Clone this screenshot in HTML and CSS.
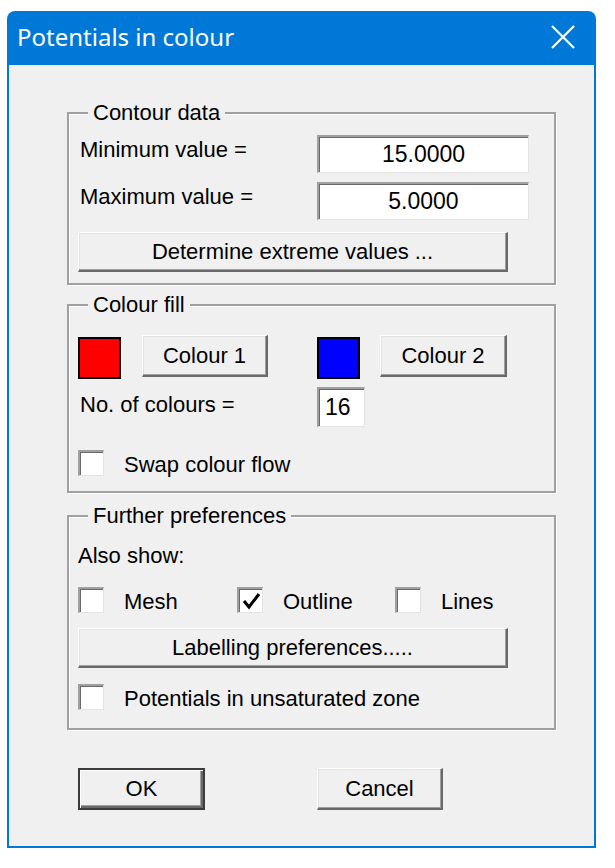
FILE: index.html
```html
<!DOCTYPE html>
<html>
<head>
<meta charset="utf-8">
<link rel="stylesheet" href="styles.css">
</head>
<body>
<div class="window">
  <div class="titlebar">
    <span class="title">Potentials in colour</span>
    <svg class="close" width="24" height="24" viewBox="0 0 24 24"><path d="M1 1 L23 23 M23 1 L1 23" stroke="#fff" stroke-width="2.2" fill="none"/></svg>
  </div>
  <div class="client">
    <fieldset class="group g1">
      <legend>Contour data</legend>
      <div class="vrow">
        <span class="label">Minimum value =</span>
        <div class="field val">15.0000</div>
      </div>
      <div class="vrow r2">
        <span class="label">Maximum value =</span>
        <div class="field val">5.0000</div>
      </div>
      <div class="btn full b-det">Determine extreme values ...</div>
    </fieldset>

    <fieldset class="group g2">
      <legend>Colour fill</legend>
      <div class="crow">
        <span class="swatch red"></span>
        <div class="btn cbtn">Colour 1</div>
        <span class="swatch blue"></span>
        <div class="btn cbtn">Colour 2</div>
      </div>
      <div class="nrow">
        <span class="label">No. of colours =</span>
        <div class="field num">16</div>
      </div>
      <label class="check swap"><span class="box"></span><span class="ctext">Swap colour flow</span></label>
    </fieldset>

    <fieldset class="group g3">
      <legend>Further preferences</legend>
      <div class="also">Also show:</div>
      <div class="checks">
        <label class="check c-mesh"><span class="box"></span><span class="ctext">Mesh</span></label>
        <label class="check c-outline"><span class="box"><svg width="22" height="22" viewBox="0 0 22 22"><path d="M4 11 L9 17 L19 4" stroke="#000" stroke-width="3" fill="none"/></svg></span><span class="ctext">Outline</span></label>
        <label class="check c-lines"><span class="box"></span><span class="ctext">Lines</span></label>
      </div>
      <div class="btn full b-lab">Labelling preferences.....</div>
      <label class="check unsat"><span class="box"></span><span class="ctext">Potentials in unsaturated zone</span></label>
    </fieldset>

    <div class="actions">
      <div class="btn ok">OK</div>
      <div class="btn cancel">Cancel</div>
    </div>
  </div>
</div>
</body>
</html>
```

FILE: styles.css
```css
* { box-sizing: border-box; }
html, body { margin: 0; padding: 0; background: #ffffff; }
body {
  padding: 11px 0 0 7px;
  font-family: "Liberation Sans", Arial, sans-serif;
  font-size: 22px;
  color: #000;
}
.window {
  width: 589px;
  background: #0078d7;
  border-radius: 8px 8px 0 0;
  padding: 0 2px 2px 2px;
}
.titlebar {
  height: 54px;
  display: flex;
  align-items: center;
  justify-content: space-between;
  padding: 0 19px 0 8px;
}
.title {
  font-family: "Noto Sans", "Open Sans", sans-serif;
  font-size: 24px;
  color: #fff;
  line-height: 30px;
  margin-top: -2px;
}
.close { display: block; margin-top: -2px; }
.client {
  background: #f0f0f0;
  height: 781px;
  padding: 36px 0 0 58px;
}
.group {
  margin: 0;
  width: 489px;
  min-width: 0;
  border: 2px solid #a0a0a0;
  box-shadow: inset 1px 1px 0 #fff, 1px 1px 0 #fff;
  padding: 10px 9px 11px 9px;
}
.group legend {
  margin-left: 10px;
  padding: 0 5px;
  line-height: 24px;
  font-size: 22px;
  background: #f0f0f0;
}
.label { line-height: 24px; white-space: nowrap; }
.vrow {
  display: grid;
  grid-template-columns: 239px 212px;
  align-items: start;
}
.vrow .label { padding: 3px 0 0 2px; }
.vrow.r2 { margin-top: 9px; }
.field {
  background: #fff;
  border-style: solid;
  border-width: 2px 1px 1px 2px;
  border-color: #a0a0a0 #e3e3e3 #e3e3e3 #a0a0a0;
  box-shadow: inset 1px 1px 0 #696969;
  display: flex;
  align-items: center;
  justify-content: center;
  font-size: 23px;
}
.field.val { height: 38px; }
.btn {
  display: flex;
  align-items: center;
  justify-content: center;
  background: #f0f0f0;
  border-style: solid;
  border-width: 1px 2px 2px 1px;
  border-color: #fff #696969 #696969 #fff;
  box-shadow: inset -1px -1px 0 #a0a0a0, inset 1px 1px 0 #e3e3e3;
  line-height: 24px;
  white-space: nowrap;
}
.btn.full { width: 430px; height: 40px; }
.b-det { margin-top: 12px; }

.g2 { margin-top: 8px; padding: 18px 9px 15px 9px; }
.crow { display: flex; align-items: flex-start; height: 44px; }
.swatch {
  display: block;
  width: 43px;
  height: 42px;
  margin-top: 2px;
  border: 2px solid #000;
}
.swatch.red { background: #ff0000; }
.swatch.blue { background: #0000ff; margin-left: 49px; }
.cbtn { width: 126px; height: 42px; margin-left: 21px; }
.swatch.blue + .cbtn { margin-left: 20px; width: 127px; }
.nrow {
  display: grid;
  grid-template-columns: 239px 48px;
  align-items: center;
  margin-top: 8px;
}
.nrow .label { padding-left: 2px; margin-top: -4px; }
.field.num { height: 40px; justify-content: flex-start; padding-left: 6px; }

.check {
  display: flex;
  align-items: center;
  height: 26px;
  line-height: 24px;
  white-space: nowrap;
}
.ctext { padding-top: 3px; }
.box {
  width: 26px;
  height: 26px;
  flex: none;
  margin-right: 20px;
  background: #fff;
  border-style: solid;
  border-width: 2px 1px 1px 2px;
  border-color: #a0a0a0 #e3e3e3 #e3e3e3 #a0a0a0;
  box-shadow: inset 1px 1px 0 #696969;
  display: flex;
  align-items: center;
  justify-content: center;
}
.box svg { display: block; }
.swap { margin-top: 23px; }

.g3 { margin-top: 11px; padding: 0 9px 18px 9px; }
.also { line-height: 24px; margin-top: 16px; }
.checks { display: flex; margin-top: 19px; }
.c-mesh { width: 159px; }
.c-outline { width: 158px; }
.b-lab { margin-top: 15px; }
.unsat { margin-top: 16px; }

.actions {
  display: flex;
  margin-top: 38px;
  padding-left: 11px;
}
.ok {
  width: 127px;
  height: 42px;
  border: 2px solid #3c3c3c;
  box-shadow: inset 1px 1px 0 #fff, inset -2px -2px 0 #696969, inset -3px -3px 0 #a0a0a0;
}
.cancel {
  width: 126px;
  height: 42px;
  margin-left: 112px;
}
```
